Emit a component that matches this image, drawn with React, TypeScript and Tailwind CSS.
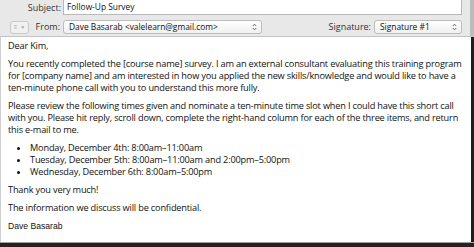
import React from 'react';

const ArrowPair = () => (
  <svg width="5" height="8" viewBox="0 0 5 8" className="shrink-0">
    <path d="M0.8 3 L2.5 1.2 L4.2 3" fill="none" stroke="#555" strokeWidth="0.9" />
    <path d="M0.8 5 L2.5 6.8 L4.2 5" fill="none" stroke="#555" strokeWidth="0.9" />
  </svg>
);

const para1 = [
  'You recently completed the [course name] survey. I am an external consultant evaluating this training program',
  'for [company name] and am interested in how you applied the new skills/knowledge and would like to have a',
  'ten-minute phone call with you to understand this more fully.',
];

const para2 = [
  'Please review the following times given and nominate a ten-minute time slot when I could have this short call',
  'with you. Please hit reply, scroll down, complete the right-hand column for each of the three items, and return',
  'this e-mail to me.',
];

const bullets = [
  'Monday, December 4th: 8:00am–11:00am',
  'Tuesday, December 5th: 8:00am–11:00am and 2:00pm–5:00pm',
  'Wednesday, December 6th: 8:00am–5:00pm',
];

export default function App() {
  return (
    <div className="w-[474px] h-[247px] flex flex-col bg-white overflow-hidden text-[#111] font-['Open_Sans',sans-serif]">
      {/* header */}
      <div className="h-[37px] shrink-0 bg-[#e8e8e8] border-b border-[#c4c4c4] flex">
        <div className="flex-1 flex flex-col text-[9px]">
          <div className="flex items-center h-[15px]">
            <span className="w-[63px] text-right pr-[2px] text-[#333]">Subject:</span>
            <div className="flex-1 h-[15px] bg-white border border-t-0 border-[#b9b9b9] flex items-center pl-[3px] mr-[8px] text-[8.4px]">
              Follow-Up Survey
            </div>
          </div>
          <div className="flex items-center h-[14px] mt-[5px]">
            <div className="ml-[10px] w-[19px] h-[13px] rounded-[3px] border border-[#c9c9c9] bg-[#f1f1f1] flex items-center justify-center gap-[3px] text-[#a9a9a9]">
              <span className="text-[6px] leading-none">≡</span>
              <span className="text-[5px] leading-none">▼</span>
            </div>
            <span className="w-[34px] shrink-0 text-right pr-[3px] text-[#333]">From:</span>
            <div className="w-[199px] shrink-0 h-[14px] rounded-[3px] border border-[#bdbdbd] bg-gradient-to-b from-white to-[#f0f0f0] flex items-center pl-[5px] pr-[4px] justify-between text-[8.4px]">
              <span>Dave Basarab &lt;valelearn@gmail.com&gt;</span>
              <ArrowPair />
            </div>
            <span className="ml-auto pr-[3px] text-[#333]">Signature:</span>
            <div className="w-[88px] shrink-0 h-[14px] rounded-[3px] border border-[#bdbdbd] bg-gradient-to-b from-white to-[#f0f0f0] flex items-center pl-[5px] pr-[4px] justify-between mr-[8px] text-[8.4px]">
              <span>Signature #1</span>
              <ArrowPair />
            </div>
          </div>
        </div>
        <div className="w-[4px] bg-[#bdbdbd]" />
      </div>

      {/* body */}
      <div className="flex-1 flex min-h-0">
        <div className="flex-1 border-l border-[#d0d0d0] pl-[7px] pt-[3px] text-[9.2px] leading-[12px] tracking-[-0.18px] flex flex-col gap-[6px] whitespace-nowrap">
          <p>Dear Kim,</p>
          <div>
            {para1.map((l) => (
              <p key={l}>{l}</p>
            ))}
          </div>
          <div>
            {para2.map((l) => (
              <p key={l}>{l}</p>
            ))}
          </div>
          <ul className="list-disc pl-[22px]">
            {bullets.map((b) => (
              <li key={b}>{b}</li>
            ))}
          </ul>
          <p>Thank you very much!</p>
          <p>The information we discuss will be confidential.</p>
          <p className="font-['Liberation_Sans',sans-serif] tracking-normal text-[8.6px]">Dave Basarab</p>
        </div>
        <div className="w-[3px] bg-[#1e1e1e]" />
      </div>

      {/* bottom edge */}
      <div className="h-[5px] shrink-0 border-t border-[#a0a0a0] bg-[#232323]" />
    </div>
  );
}
